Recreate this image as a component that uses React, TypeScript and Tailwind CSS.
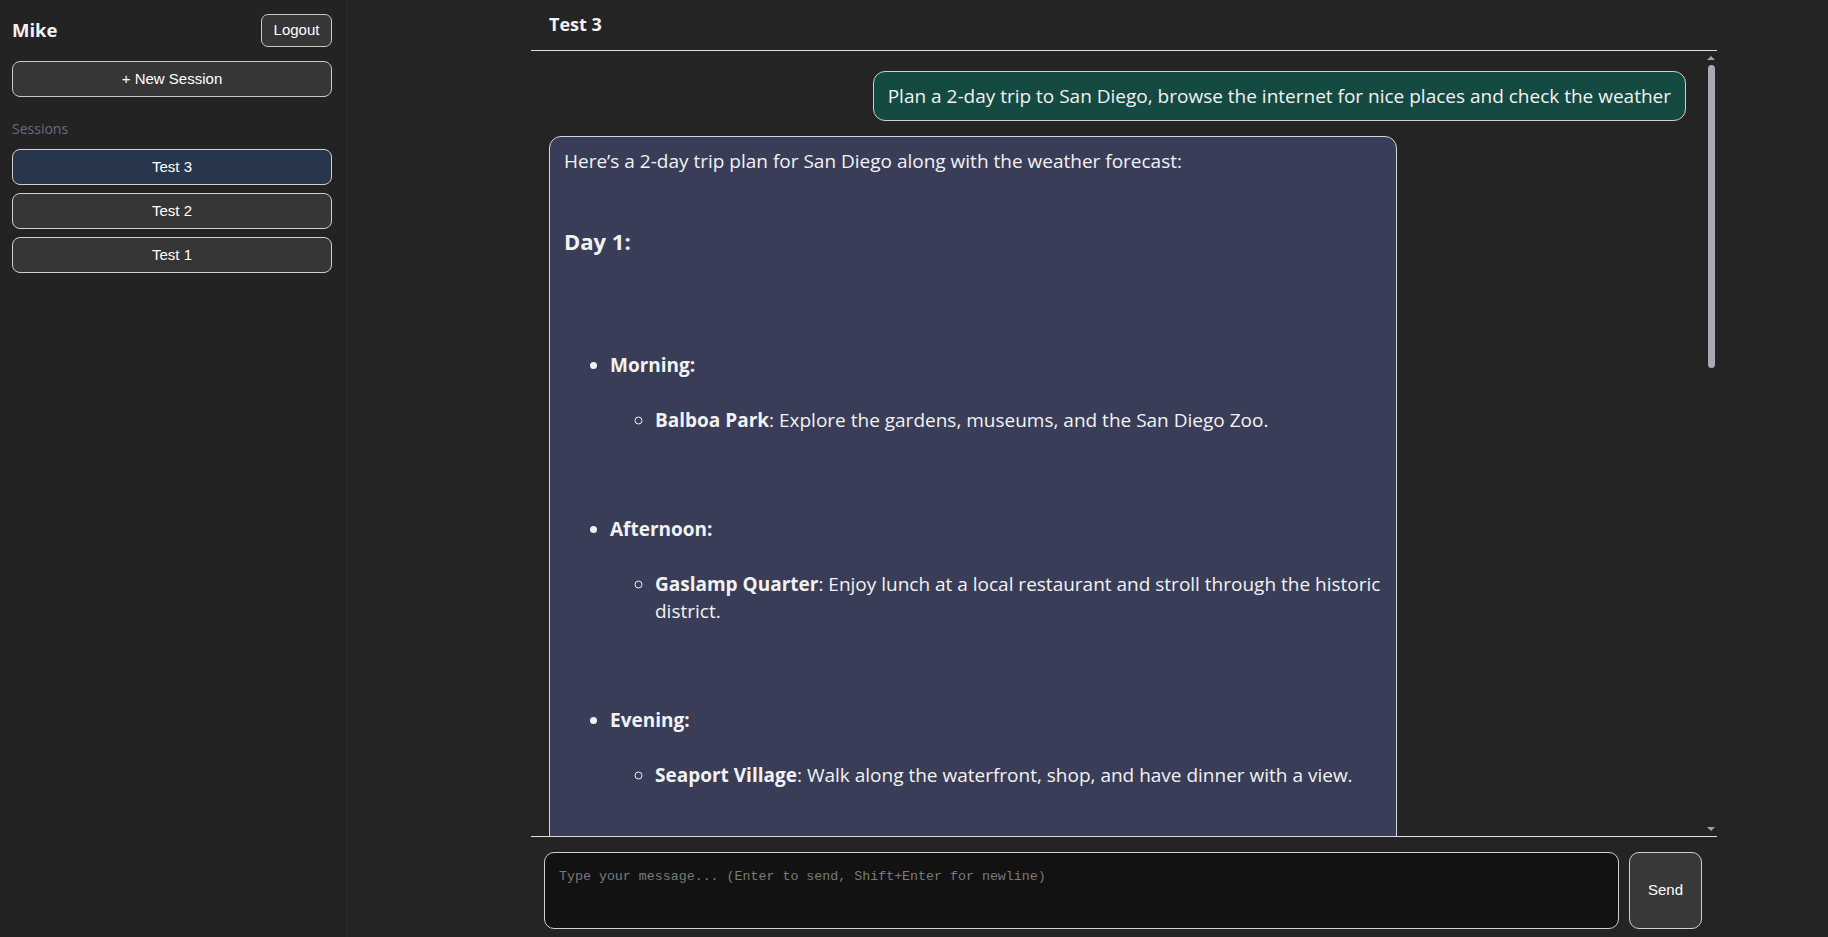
const sessions = [
  { name: "Test 3", active: true },
  { name: "Test 2", active: false },
  { name: "Test 1", active: false },
];

type Item = { title: string; places: { name: string; text: string }[] };

const day1: Item[] = [
  {
    title: "Morning:",
    places: [{ name: "Balboa Park", text: ": Explore the gardens, museums, and the San Diego Zoo." }],
  },
  {
    title: "Afternoon:",
    places: [
      {
        name: "Gaslamp Quarter",
        text: ": Enjoy lunch at a local restaurant and stroll through the historic district.",
      },
    ],
  },
  {
    title: "Evening:",
    places: [{ name: "Seaport Village", text: ": Walk along the waterfront, shop, and have dinner with a view." }],
  },
];

const day2: Item[] = [
  {
    title: "Morning:",
    places: [{ name: "La Jolla Cove", text: ": See the sea lions and snorkel in the clear water." }],
  },
  {
    title: "Afternoon:",
    places: [{ name: "Torrey Pines State Reserve", text: ": Hike the trails with views over the Pacific." }],
  },
  {
    title: "Evening:",
    places: [{ name: "Coronado Beach", text: ": Watch the sunset and have dinner at the Hotel del Coronado." }],
  },
];

function DayPlan({ title, items, first }: { title: string; items: Item[]; first?: boolean }) {
  return (
    <>
      <h3 className={(first ? "mt-[50px]" : "mt-[90px]") + " text-[22px] font-bold leading-[33px]"}>{title}</h3>
      <ul className="mt-[94px] list-disc pl-[46px]">
        {items.map((it, i) => (
          <li key={it.title} className={i > 0 ? "mt-[82px]" : ""}>
            <strong className="font-bold">{it.title}</strong>
            <ul className="mt-[28px] list-[circle] pl-[45px]">
              {it.places.map((p) => (
                <li key={p.name}>
                  <strong className="font-bold">{p.name}</strong>
                  {p.text}
                </li>
              ))}
            </ul>
          </li>
        ))}
      </ul>
    </>
  );
}

function ScrollBar() {
  return (
    <div className="flex w-[12px] shrink-0 flex-col items-center">
      <div className="flex h-[14px] items-center justify-center">
        <div className="h-0 w-0 border-x-[4px] border-b-[4px] border-x-transparent border-b-[#a3a3a3]" />
      </div>
      <div className="h-[303px] w-[7px] rounded-full bg-[#a8aab2]" />
      <div className="flex-1" />
      <div className="flex h-[14px] items-center justify-center">
        <div className="h-0 w-0 border-x-[4px] border-t-[4px] border-x-transparent border-t-[#a3a3a3]" />
      </div>
    </div>
  );
}

export default function App() {
  return (
    <div className="flex h-[937px] w-full overflow-hidden bg-[#242424] font-['Open_Sans',sans-serif] text-[#f2f2f2]">
      <aside className="flex w-[347px] shrink-0 flex-col border-r border-[#2e2e2e] bg-[#232323] pl-3 pr-[14px] pt-[14px]">
        <div className="flex h-[33px] items-center justify-between">
          <span className="-mt-[2px] text-[18.5px] font-bold">Mike</span>
          <button className="h-[33px] w-[71px] rounded-[7px] border border-[#c9c9c9] bg-[#363636] font-['Liberation_Sans',sans-serif] text-[15px] text-white">
            Logout
          </button>
        </div>
        <button className="mt-[14px] h-[36px] rounded-[8px] border border-[#c9c9c9] bg-[#363636] font-['Liberation_Sans',sans-serif] text-[15px] text-white">
          + New Session
        </button>
        <div className="mt-[22px] text-[14px] leading-[20px] text-[#6b6b7c]">Sessions</div>
        <div className="mt-[10px] flex flex-col gap-[8px]">
          {sessions.map((s) => (
            <button
              key={s.name}
              className={
                "h-[36px] rounded-[8px] border border-[#d0d0d0] font-['Liberation_Sans',sans-serif] text-[15px] text-white " +
                (s.active ? "bg-[#27364a]" : "bg-[#363636]")
              }
            >
              {s.name}
            </button>
          ))}
        </div>
      </aside>

      <main className="flex-1 pl-[184px]">
        <div className="flex h-full w-[1186px] flex-col">
          <header className="flex h-[51px] shrink-0 items-center border-b border-[#dedede] px-[18px] pb-[2px]">
            <h2 className="text-[18px] font-bold">Test 3</h2>
          </header>

          <div className="flex min-h-0 flex-1">
            <div className="min-w-0 flex-1 overflow-hidden pl-[18px] pr-[19px] pt-[20px] text-[19px] leading-[27px]">
              <div className="flex flex-col">
                <div className="self-end rounded-[12px] border border-[#cfcfcf] bg-[#144a42] px-[14px] py-[10.5px]">
                  Plan a 2-day trip to San Diego, browse the internet for nice places and check the weather
                </div>

                <div className="mt-[15px] w-[848px] rounded-[12px] border border-[#d6d6d6] bg-[#3a3d57] pl-[14px] pr-[8px] pt-[11px] pb-[30px]">
                  <p>Here’s a 2-day trip plan for San Diego along with the weather forecast:</p>
                  <DayPlan title="Day 1:" items={day1} first />
                  <DayPlan title="Day 2:" items={day2} />
                  <h3 className="mt-[80px] text-[22px] font-bold leading-[33px]">Weather Forecast:</h3>
                  <ul className="mt-[60px] list-disc pl-[46px]">
                    <li>
                      <strong className="font-bold">Day 1</strong>: Sunny, high of 72°F, low of 60°F.
                    </li>
                    <li className="mt-[28px]">
                      <strong className="font-bold">Day 2</strong>: Partly cloudy, high of 70°F, low of 59°F.
                    </li>
                  </ul>
                  <p className="mt-[54px]">Enjoy your trip to San Diego!</p>
                </div>
              </div>
            </div>
            <ScrollBar />
          </div>

          <div className="flex h-[101px] shrink-0 gap-[10px] border-t border-[#dedede] pl-[13px] pr-[15px] pt-[15px] pb-[8px]">
            <textarea
              autoFocus
              className="h-[77px] flex-1 resize-none rounded-[10px] border border-[#cfcfcf] bg-[#121212] px-[14px] pt-[14px] font-['Liberation_Mono',monospace] text-[13.3px] leading-[20px] text-[#e0e0e0] outline-none placeholder:text-[#7a7a7a]"
              placeholder="Type your message... (Enter to send, Shift+Enter for newline)"
            />
            <button className="h-[77px] w-[73px] rounded-[10px] border border-[#cfcfcf] bg-[#383838] font-['Liberation_Sans',sans-serif] text-[15px] text-white">
              Send
            </button>
          </div>
        </div>
      </main>
    </div>
  );
}
